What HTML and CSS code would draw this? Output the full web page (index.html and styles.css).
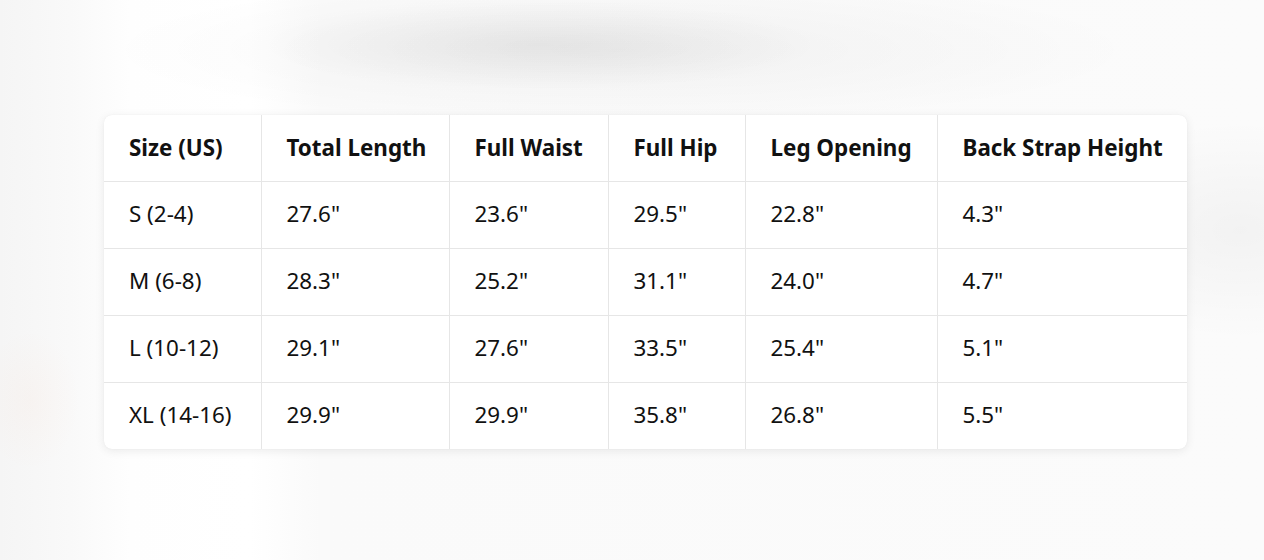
FILE: index.html
```html
<!DOCTYPE html>
<html lang="en">
<head>
<meta charset="utf-8">
<title>Size Chart</title>
<link rel="stylesheet" href="styles.css">
</head>
<body>
<main class="stage">
  <div class="card">
    <table class="size-table">
      <thead>
        <tr>
          <th>Size (US)</th>
          <th>Total Length</th>
          <th>Full Waist</th>
          <th>Full Hip</th>
          <th>Leg Opening</th>
          <th>Back Strap Height</th>
        </tr>
      </thead>
      <tbody>
        <tr><td>S (2-4)</td><td>27.6"</td><td>23.6"</td><td>29.5"</td><td>22.8"</td><td>4.3"</td></tr>
        <tr><td>M (6-8)</td><td>28.3"</td><td>25.2"</td><td>31.1"</td><td>24.0"</td><td>4.7"</td></tr>
        <tr><td>L (10-12)</td><td>29.1"</td><td>27.6"</td><td>33.5"</td><td>25.4"</td><td>5.1"</td></tr>
        <tr><td>XL (14-16)</td><td>29.9"</td><td>29.9"</td><td>35.8"</td><td>26.8"</td><td>5.5"</td></tr>
      </tbody>
    </table>
  </div>
</main>
</body>
</html>
```
FILE: styles.css
```css
html, body {
  margin: 0;
  padding: 0;
  height: 100%;
}
body {
  font-family: "Noto Sans", "Open Sans", sans-serif;
  color: #111;
  background-color: #fbfbfb;
  background-image:
    radial-gradient(ellipse 280px 45px at 540px 45px, rgba(0,0,0,0.06), rgba(0,0,0,0) 100%),
    radial-gradient(ellipse 520px 75px at 620px 50px, rgba(0,0,0,0.04), rgba(0,0,0,0) 100%),
    radial-gradient(ellipse 180px 110px at 1240px 230px, rgba(0,0,0,0.035), rgba(0,0,0,0) 100%),
    radial-gradient(ellipse 50px 70px at 30px 400px, rgba(255,130,70,0.035), rgba(255,255,255,0) 100%),
    linear-gradient(90deg, #f5f5f5 0px, #f9f9f9 70px, #fefefe 130px, #ffffff 250px, #fafafa 320px, #fbfbfb 100%);
}
.stage {
  box-sizing: border-box;
  height: 560px;
  padding: 115px 77px 0 104px;
}
.card {
  width: 1083px;
  background: #fff;
  border-radius: 8px;
  overflow: hidden;
  box-shadow: 0 2px 10px rgba(0,0,0,0.08), 0 0 1px rgba(0,0,0,0.08);
}
.size-table {
  width: 100%;
  border-collapse: collapse;
  table-layout: fixed;
}
.size-table th,
.size-table td {
  box-sizing: border-box;
  text-align: left;
  vertical-align: middle;
  padding: 0 0 0 25px;
  font-size: 22.4px;
  line-height: 30px;
  border-right: 1px solid #e6e6e6;
  border-bottom: 1px solid #e6e6e6;
  white-space: nowrap;
}
.size-table th:last-child,
.size-table td:last-child { border-right: none; }
.size-table tbody tr:last-child td { border-bottom: none; }
.size-table th {
  height: 66px;
  padding-bottom: 0;
  font-weight: 700;
}
.size-table td {
  height: 67px;
  padding-bottom: 2px;
  font-weight: 400;
}
.size-table th:nth-child(1) { width: 157px; }
.size-table th:nth-child(2) { width: 188px; }
.size-table th:nth-child(3) { width: 159px; }
.size-table th:nth-child(4) { width: 137px; }
.size-table th:nth-child(5) { width: 192px; }
```
